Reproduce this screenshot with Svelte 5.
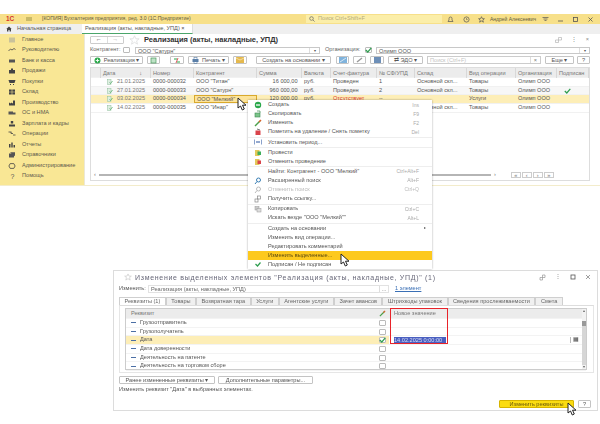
<script>
  const nav = [
    ['Главное', 'M-3-2.5h6v5h-6z', '#c9c29a'],
    ['Руководителю', 'M-3.5 1l2-2 1.5 1 2-1.5 1.5 1', 'none'],
    ['Банк и касса', 'M-3-1.5h6v3h-6z', '#555'],
    ['Продажи', 'M-3-1h6v3.5h-6zM-1-2.5h2v1.5h-2z', '#444'],
    ['Покупки', 'M-3.5-2h7l-1 3h-5zM-2 2h1v1h-1zM1 2h1v1h-1z', '#444'],
    ['Склад', 'M-3-2.5h2.7v2.3h-2.7zM.3-2.5h2.7v2.3h-2.7zM-3 .3h2.7v2.3h-2.7zM.3.3h2.7v2.3h-2.7z', '#444'],
    ['Производство', 'M-3 2.5v-3l2 1v-1l2 1v-3h2v5z', '#444'],
    ['ОС и НМА', 'M-3.5-1.5h4.5v3h-4.5zM1-.5h2.5v2h-2.5z', '#555'],
    ['Зарплата и кадры', 'M-1.2-3h2.4v2.5h-2.4zM-3 .5h6v2h-6z', '#444'],
    ['Операции', 'M-3.5-2h3M-1-2v1.5h2M1 1h2.5', 'none'],
    ['Отчеты', 'M-3-1h1.5v3.5h-1.5zM-.7-2.5h1.4v5h-1.4zM1.5 0h1.5v2.5h-1.5z', '#444'],
    ['Справочники', 'M-3-1.5h5v4h-5zM-2-2.7h5v4', '#555'],
    ['Администрирование', 'M-1.8-2.4h3.6l1.3 2.4-1.3 2.4h-3.6l-1.3-2.4z', 'none'],
    ['Помощь', '', 'none'],
  ];

  const columns = ['', 'Дата', 'Номер', 'Контрагент', 'Сумма', 'Валюта', 'Счет-фактура', '№ СФ/УПД', 'Склад', 'Вид операции', 'Организация', 'Подписан'];

  const docs = [
    { date: '21.01.2025', num: '0000-000032', who: 'ООО "Титан"', sum: '16 000,00', cur: 'руб.', inv: 'Проведен', no: '1', store: 'Основной скл...', op: 'Товары' },
    { date: '27.01.2025', num: '0000-000033', who: 'ООО "Сатурн"', sum: '960 000,00', cur: 'руб.', inv: 'Проведен', no: '2', store: 'Основной скл...', op: 'Товары', signed: true },
    { date: '03.02.2025', num: '0000-000034', who: 'ООО "Мелкий"', sum: '120 000,00', cur: 'руб.', inv: 'Отсутствует', no: '--', store: '', op: 'Услуги', selected: true },
    { date: '14.02.2025', num: '0000-000035', who: 'ООО "Инар"', sum: '', cur: '', inv: '', no: '', store: 'Основной скл...', op: 'Товары' },
  ];

  const menu = [
    [
      { label: 'Создать', key: 'Ins', icon: 'add' },
      { label: 'Скопировать', key: 'F9', icon: 'copy' },
      { label: 'Изменить', key: 'F2', icon: 'edit' },
      { label: 'Пометить на удаление / Снять пометку', key: 'Del', icon: 'del' },
    ],
    [{ label: 'Установить период...', icon: 'period' }],
    [
      { label: 'Провести', icon: 'post' },
      { label: 'Отменить проведение', icon: 'unpost' },
    ],
    [
      { label: 'Найти: Контрагент - ООО "Мелкий"', key: 'Ctrl+Alt+F' },
      { label: 'Расширенный поиск', key: 'Alt+F', icon: 'find' },
      { label: 'Отменить поиск', key: 'Ctrl+Q', icon: 'unfind', muted: true },
      { label: 'Получить ссылку...', icon: 'link' },
    ],
    [
      { label: 'Копировать', key: 'Ctrl+C', icon: 'clip' },
      { label: 'Искать везде "ООО "Мелкий""', key: 'Alt+L' },
    ],
    [
      { label: 'Создать на основании', arrow: true },
      { label: 'Изменить вид операции...' },
      { label: 'Редактировать комментарий' },
      { label: 'Изменить выделенные...', active: true },
      { label: 'Подписан / Не подписан', icon: 'check' },
    ],
  ];

  const tabs = ['Реквизиты (1)', 'Товары', 'Возвратная тара', 'Услуги', 'Агентские услуги', 'Зачет авансов', 'Штрихкоды упаковок', 'Сведения прослеживаемости', 'Смета'];
  const props = ['Грузоотправитель', 'Грузополучатель', 'Дата', 'Дата доверенности', 'Деятельность на патенте', 'Деятельность на торговом сборе'];
</script>

{#snippet cursor()}
  <svg width="11" height="14" viewBox="0 0 11 14"><path d="M1 1v10l2.5-2 1.8 4 2-1-1.8-3.800H9z" fill="#fff" stroke="#222" stroke-width="1"/></svg>
{/snippet}

{#snippet check()}
  <svg width="7" height="6" viewBox="0 0 7 6"><path d="M.8 3l2 2L6.300.8" fill="none" stroke="#2f9e4f" stroke-width="1.200"/></svg>
{/snippet}

{#snippet menuIcon(name)}
  <svg width="8" height="8" viewBox="0 0 8 8">
    {#if name === 'add'}
      <circle cx="4" cy="4" r="3.200" fill="#2aa84a"/><path d="M2 4h4" stroke="#fff" stroke-width="1.300"/>
    {:else if name === 'copy'}
      <rect x="1" y="3" width="5" height="4" fill="#7cc48a" stroke="#3c8a50" stroke-width=".6"/><path d="M3 1h3v2" fill="none" stroke="#3c8a50" stroke-width=".7"/>
    {:else if name === 'edit'}
      <path d="M1 7l5-5" stroke="#4aa04a" stroke-width="1.400"/><path d="M5 3l2-2" stroke="#d9602a" stroke-width="1.400"/>
    {:else if name === 'del'}
      <rect x="1.500" y="2.500" width="5" height="4.500" fill="#d9434a"/><path d="M3 1l3 1" stroke="#555" stroke-width=".8"/>
    {:else if name === 'period'}
      <path d="M0 1.500v5M8 1.500v5M2 4h4" stroke="#2b55a0" stroke-width="1.100"/>
    {:else if name === 'post'}
      <rect x="1" y="1" width="4.500" height="6" fill="#e3c95a"/><rect x="3.500" y="2.500" width="3.500" height="3.500" fill="#3fae5a"/>
    {:else if name === 'unpost'}
      <rect x="1" y="1" width="4.500" height="6" fill="#e3c95a"/><rect x="3.500" y="2.500" width="3.500" height="3.500" fill="#d9434a"/>
    {:else if name === 'find'}
      <circle cx="4.500" cy="3" r="2" fill="none" stroke="#3a7fb5"/><path d="M3 4.500L1 7" stroke="#3a7fb5"/>
    {:else if name === 'unfind'}
      <circle cx="4.500" cy="3" r="2" fill="none" stroke="#bbb"/><path d="M3 4.500L1 7" stroke="#bbb"/>
    {:else if name === 'link'}
      <rect x="3.500" y="1" width="3" height="3" fill="none" stroke="#888" stroke-width=".7"/><rect x="1" y="4" width="3" height="3" fill="none" stroke="#888" stroke-width=".7"/>
    {:else if name === 'clip'}
      <rect x="1" y="1.500" width="4" height="3.500" fill="#ccc" stroke="#999" stroke-width=".5"/><rect x="3" y="3.500" width="4" height="3.500" fill="#ddd" stroke="#999" stroke-width=".5"/>
    {:else if name === 'check'}
      <path d="M1.500 4l2 2 3-3.500" fill="none" stroke="#2f9e4f" stroke-width="1.200"/>
    {/if}
  </svg>
{/snippet}

<div class="page">
  <section class="main-window">
    <header class="titlebar">
      <span class="logo">1С</span>
      <span class="burger"></span>
      <span class="app-title">[КОПИЯ] Бухгалтерия предприятия, ред. 3.0 (1С:Предприятие)</span>
      <span class="search">
        <svg width="6" height="6" viewBox="0 0 6 6"><circle cx="2.500" cy="2.500" r="1.800" fill="none" stroke="#666" stroke-width=".7"/><path d="M4 4l1.600 1.600" stroke="#666" stroke-width=".7"/></svg>
        Поиск Ctrl+Shift+F
      </span>
      <span class="title-icons">
        <svg width="7" height="7" viewBox="0 0 7 7"><path d="M1 5.500h5L5 4V2.500a1.500 1.500 0 0 0-3 0V4z" fill="none" stroke="#555" stroke-width=".7"/></svg>
        <svg width="7" height="7" viewBox="0 0 7 7"><circle cx="3.500" cy="3.500" r="2.600" fill="none" stroke="#555" stroke-width=".7"/><path d="M3.500 2v1.600h1.200" fill="none" stroke="#555" stroke-width=".6"/></svg>
        <svg width="7" height="7" viewBox="0 0 7 7"><path d="M3.500.7l.9 2h2l-1.600 1.400.6 2.100-1.900-1.200-1.900 1.200.6-2.100L.6 2.700h2z" fill="none" stroke="#555" stroke-width=".7"/></svg>
      </span>
      <span class="user">Андрей Алексеевич</span>
      <span class="win-icons">
        <svg width="7" height="7" viewBox="0 0 7 7"><path d="M.5 1.500h6M1.500 3h4M2.500 4.500h2" stroke="#555" stroke-width=".7"/></svg>
        <svg width="7" height="7" viewBox="0 0 7 7"><path d="M1 5h5" stroke="#555" stroke-width=".8"/></svg>
        <svg width="7" height="7" viewBox="0 0 7 7"><rect x="1.500" y="1.500" width="4" height="4" fill="none" stroke="#555" stroke-width=".8"/></svg>
        <svg width="7" height="7" viewBox="0 0 7 7"><path d="M1.500 1.500l4 4M5.500 1.500l-4 4" stroke="#555" stroke-width=".8"/></svg>
      </span>
    </header>

    <div class="tabstrip">
      <div class="home-tab">
        <svg width="6" height="6" viewBox="0 0 6 6"><path d="M3 .5L.3 3H1v2.500h1.400V4h1.200v1.500H5V3h.7z" fill="#444"/></svg>
        Начальная страница
      </div>
      <div class="doc-tab">Реализация (акты, накладные, УПД) <b>×</b></div>
    </div>

    <div class="workspace">
      <nav class="sidebar">
        {#each nav as [label, d, fill]}
          <div class="nav-item">
            <svg width="8" height="8" viewBox="-4 -4 8 8">
              {#if d}
                <path {d} fill={fill} stroke={fill === 'none' ? '#444' : 'none'} stroke-width=".8"/>
              {:else}
                <text x="-1.500" y="2.500" font-size="7" fill="#555">?</text>
              {/if}
            </svg>
            <span>{label}</span>
          </div>
        {/each}
      </nav>

      <main class="content">
        <div class="heading">
          <div class="nav-btns"><span>←</span><span class="dim">→</span></div>
          <svg class="fav" width="11" height="10" viewBox="0 0 11 10"><path d="M5.500.8l1.400 3h3.200L7.600 5.900l.9 3.300-3-1.900-3 1.900.9-3.300L.9 3.800h3.200z" fill="none" stroke="#ddd" stroke-width=".8"/></svg>
          <h1>Реализация (акты, накладные, УПД)</h1>
          <div class="heading-tools">
            <svg width="7" height="6" viewBox="0 0 7 6"><path d="M3.500.5h3v2.500h-3zM.5 3h3v2.500h-3z" fill="none" stroke="#aaa" stroke-width=".6"/></svg>
            <span class="dots">⋮</span><span class="close">×</span>
          </div>
        </div>

        <div class="filters">
          <span class="lbl">Контрагент:</span>
          <span class="box"></span>
          <span class="field party">ООО "Сатурн"<i>▾</i></span>
          <span class="lbl org-lbl">Организация:</span>
          <span class="box on">{@render check()}</span>
          <span class="field org">Олимп ООО<i>▾</i></span>
        </div>

        <div class="toolbar">
          <button class="btn w-real"><svg width="7" height="7" viewBox="0 0 8 8"><circle cx="4" cy="4" r="3.400" fill="#2aa84a"/><path d="M4 2v4M2 4h4" stroke="#fff"/></svg>Реализация ▾</button>
          <button class="btn w-ico"><svg width="7" height="7" viewBox="0 0 7 7"><rect x="1" y="1" width="5" height="5" fill="#bfe2c6" stroke="#4a9a5e" stroke-width=".7"/></svg></button>
          <button class="btn w-ico2"><svg width="8" height="7" viewBox="0 0 8 7"><path d="M1 2h3M4 5h3" stroke="#2aa84a" stroke-width="1.200"/><path d="M5 1l-2 5" stroke="#d9434a" stroke-width=".9"/></svg></button>
          <button class="btn w-print"><svg width="7" height="7" viewBox="0 0 7 7"><rect x=".5" y="2" width="6" height="3" fill="#5b7fa8"/><rect x="2" y=".5" width="3" height="6" fill="none" stroke="#5b7fa8" stroke-width=".6"/></svg>Печать ▾</button>
          <button class="btn w-mail"><svg width="8" height="6" viewBox="0 0 8 6"><rect width="8" height="6" fill="#e5b94d"/><path d="M0 1l4 2 4-2" fill="none" stroke="#fff" stroke-width=".5"/></svg></button>
          <button class="btn w-create">Создать на основании ▾</button>
          <button class="btn w-a"><svg width="8" height="6" viewBox="0 0 8 6"><rect width="8" height="6" fill="#7fb3dc"/><path d="M1 5l6-4" stroke="#fff" stroke-width=".7"/></svg></button>
          <button class="btn w-b"><svg width="7" height="6" viewBox="0 0 7 6"><path d="M1 5l5-4" stroke="#999" stroke-width="1.500"/></svg></button>
          <button class="btn w-c"><svg width="7" height="6" viewBox="0 0 7 6"><rect width="7" height="6" fill="#6d8fb8"/></svg></button>
          <button class="btn w-edo">⇄ ЭДО ▾</button>
          <span class="find">Поиск (Ctrl+F)<i>×</i></span>
          <button class="btn w-more">Еще ▾</button>
          <button class="btn w-help">?</button>
        </div>

        <div class="table">
          <div class="row head">
            {#each columns as c, i}
              <span>{c}{#if i === 1}<em>↓</em>{/if}</span>
            {/each}
          </div>
          {#each docs as d}
            <div class="row" class:sel={d.selected}>
              <span></span>
              <span class="date"><svg width="6" height="6" viewBox="0 0 6 6"><rect x=".5" y=".5" width="3.500" height="5" fill="#dfeee2" stroke="#8fbf9b" stroke-width=".5"/><path d="M2.500 3.500l1 1 2-2.500" fill="none" stroke="#3fa35a" stroke-width=".7"/></svg>{d.date}</span>
              <span>{d.num}</span>
              <span class:cell-focus={d.selected}>{d.who}</span>
              <span class="right">{d.sum}</span>
              <span>{d.cur}</span>
              <span class:red={d.selected}>{d.inv}</span>
              <span>{d.no}</span>
              <span>{d.store}</span>
              <span>{d.op}</span>
              <span>Олимп ООО</span>
              <span class="mid">{#if d.signed}{@render check()}{/if}</span>
            </div>
          {/each}
          <div class="table-fill"></div>
          <div class="table-foot">
            <span class="arrow">‹</span>
            <span class="scroll"></span>
            <span class="arrow">›</span>
            <span class="pager"><i>«</i><i>‹</i><i>›</i><i>»</i></span>
          </div>
        </div>
      </main>
    </div>
  </section>

  <div class="pointer on-row">{@render cursor()}</div>

  <div class="context-menu">
    {#each menu as group}
      <div class="menu-group">
        {#each group as item}
          <div class="menu-item" class:active={item.active} class:muted={item.muted}>
            <span class="mi">{#if item.icon}{@render menuIcon(item.icon)}{/if}</span>
            <span class="ml">{item.label}</span>
            {#if item.key}<span class="mk">{item.key}</span>{/if}
            {#if item.arrow}<span class="ma">▸</span>{/if}
          </div>
        {/each}
      </div>
    {/each}
    <div class="pointer on-menu">{@render cursor()}</div>
  </div>

  <section class="dialog">
    <div class="dlg-title">
      <svg width="8" height="8" viewBox="0 0 11 10"><path d="M5.500.8l1.400 3h3.200L7.600 5.900l.9 3.300-3-1.900-3 1.900.9-3.300L.9 3.800h3.200z" fill="none" stroke="#ccc"/></svg>
      <h2>Изменение выделенных элементов "Реализация (акты, накладные, УПД)" (1)</h2>
      <span class="dlg-tools">
        <svg width="7" height="7" viewBox="0 0 7 7"><path d="M3.500 1h2.500v2.500h-2.500zM1 3.500h2.500V6H1z" fill="none" stroke="#888" stroke-width=".6"/></svg>
        <span>⋮</span>
        <svg width="6" height="6" viewBox="0 0 6 6"><rect x="1" y="1" width="4" height="4" fill="none" stroke="#555" stroke-width=".8"/></svg>
        <svg width="6" height="6" viewBox="0 0 6 6"><path d="M1 1l4 4M5 1L1 5" stroke="#777" stroke-width=".7"/></svg>
      </span>
    </div>

    <div class="dlg-change">
      <span class="dark">Изменить:</span>
      <span class="dlg-field">Реализация (акты, накладные, УПД)<i>...</i></span>
      <a href="#top">1 элемент</a>
    </div>

    <div class="dlg-tabs">
      {#each tabs as t, i}
        <span class="dlg-tab" class:current={i === 0}>{t}</span>
      {/each}
    </div>

    <div class="dlg-panel">
      <div class="attrs">
        <div class="attr attr-head">
          <span class="a-name">Реквизит</span>
          <span class="a-check"><svg width="7" height="7" viewBox="0 0 8 8"><path d="M1 7l5-5" stroke="#4aa04a" stroke-width="1.400"/><path d="M5 3l2-2" stroke="#d9602a" stroke-width="1.400"/></svg></span>
          <span class="a-val">Новое значение</span>
        </div>
        {#each props as p, i}
          <div class="attr" class:picked={i === 2}>
            <span class="a-name"><i class="dash"></i>{p}</span>
            <span class="a-check"><span class="box small" class:on={i === 2}>{#if i === 2}{@render check()}{/if}</span></span>
            <span class="a-val">
              {#if i === 2}
                <span class="date-edit"><span class="hl">14.02.2025 0:00:00</span><span class="cal">▦</span></span>
              {/if}
            </span>
          </div>
        {/each}
        <div class="vscroll"><span>▴</span><b></b><em></em><span>▾</span></div>
        <div class="red-box"></div>
      </div>
    </div>

    <div class="dlg-btns">
      <button class="btn plain">Ранее измененные реквизиты ▾</button>
      <button class="btn plain">Дополнительные параметры...</button>
    </div>

    <p class="hint">Изменить реквизит "Дата" в выбранных элементах.</p>

    <div class="dlg-foot">
      <button class="primary">Изменить реквизиты</button>
      <button class="btn q">?</button>
      <div class="pointer on-btn">{@render cursor()}</div>
    </div>
  </section>
</div>

<style>
  :global(body) {
    margin: 0;
    background: #fff;
  }
  .page {
    position: relative;
    box-sizing: border-box;
    width: 600px;
    height: 424px;
    padding-top: 14px;
    overflow: hidden;
    font-family: "Liberation Sans", Arial, sans-serif;
    font-size: 5.600px;
    line-height: 1;
    color: #555;
    filter: blur(0.35px);
  }
  span, i, em { font-style: normal; }
  svg { display: block; flex: none; }

  .main-window { height: 171px; background: #fff; border-bottom: 1px solid #f3eccb; }

  .titlebar {
    display: flex;
    align-items: center;
    height: 10px;
    background: #f7e08a;
    padding-left: 6px;
    color: #5f5a3c;
  }
  .logo { width: 14px; color: #d4342a; font-weight: bold; font-size: 6.500px; }
  .burger { width: 6px; height: 4px; margin: 0 10px 0 6px; background: #c9b968; }
  .app-title { width: 264px; white-space: nowrap; font-size: 5.100px; }
  .search { display: flex; align-items: center; gap: 3px; width: 136px; height: 8px; padding-left: 3px; background: #fbeea9; color: #b5ac7a; box-sizing: border-box; }
  .title-icons { display: flex; gap: 8.500px; margin-left: 5px; }
  .user { margin-left: 5px; width: 50px; white-space: nowrap; font-size: 5px; }
  .win-icons { display: flex; gap: 8px; margin-left: 2px; }

  .tabstrip { display: flex; height: 10px; background: #efefef; }
  .home-tab { display: flex; align-items: center; gap: 5px; width: 76px; padding-left: 6px; white-space: nowrap; }
  .doc-tab {
    width: 111px;
    padding-left: 3px;
    box-sizing: border-box;
    height: 10px;
    line-height: 9px;
    background: #fff;
    border-bottom: 1px solid #4aa56a;
    border-right: 1px solid #ddd;
    white-space: nowrap;
    overflow: hidden;
  }
  .doc-tab b { color: #444; font-weight: normal; }

  .workspace { display: flex; height: 151px; }
  .sidebar { width: 84px; background: #f9e795; padding-top: 0.500px; border-right: 1px solid #ece8d6; }
  .nav-item { display: flex; align-items: center; height: 10.500px; padding-left: 8px; gap: 6px; color: #5c5a4c; }

  .content { flex: 1; display: flex; flex-direction: column; padding: 2px 10px 4px 5px; min-width: 0; }

  .heading { display: flex; align-items: center; height: 8px; }
  .nav-btns { display: flex; width: 34px; height: 8px; border: 1px solid #ccc; box-sizing: border-box; border-radius: 1px; flex: none; }
  .nav-btns span { flex: 1; text-align: center; line-height: 5px; color: #333; font-size: 6px; }
  .nav-btns .dim { color: #aaa; border-left: 1px solid #ddd; }
  .fav { margin: 0 4px 0 5px; }
  h1 { margin: 0; font-size: 7.500px; color: #333; font-weight: bold; white-space: nowrap; }
  .heading-tools { margin-left: auto; display: flex; gap: 9px; align-items: center; color: #888; }
  .close { margin-right: 1px; }

  .filters { display: flex; align-items: center; margin-top: 2.500px; height: 7px; }
  .lbl { color: #666; white-space: nowrap; width: 33px; flex: none; }
  .box { display: flex; align-items: center; justify-content: center; width: 7px; height: 6px; box-sizing: border-box; border: 0.500px solid #bbb; flex: none; border-radius: 1px; background: #fff; }
  .field { position: relative; display: block; height: 7px; box-sizing: border-box; padding-left: 2px; line-height: 6px; border: 0.500px solid #c8c8c8; color: #555; flex: none; }
  .field i { position: absolute; right: 0; top: 0; bottom: 0; width: 9px; text-align: center; border-left: 0.500px solid #ddd; font-size: 4px; }
  .party { margin-left: 5px; width: 185px; }
  .org-lbl { margin-left: 5px; width: 40px; }
  .org { margin-left: 4px; width: 214px; }

  .toolbar { display: flex; align-items: center; margin-top: 2px; height: 9px; }
  .btn {
    display: flex;
    align-items: center;
    justify-content: center;
    gap: 3px;
    height: 8px;
    padding: 0;
    box-sizing: border-box;
    border: 0.500px solid #c4c4c4;
    border-radius: 1px;
    background: #fff;
    color: #555;
    font: 5.600px "Liberation Sans", Arial, sans-serif;
    white-space: nowrap;
    flex: none;
  }
  .w-real { width: 53px; }
  .w-ico { width: 13px; margin-left: 4px; }
  .w-ico2 { width: 14px; margin-left: 10px; }
  .w-print { width: 41px; margin-left: 4px; }
  .w-mail { width: 14px; margin-left: 4px; }
  .w-create { width: 75px; margin-left: 9px; }
  .w-a { width: 13px; margin-left: 5px; }
  .w-b { width: 13px; margin-left: 4px; }
  .w-c { width: 14px; margin-left: 4px; }
  .w-edo { width: 35px; margin-left: 4px; }
  .find { position: relative; width: 114px; height: 8px; box-sizing: border-box; border: 0.500px solid #ccc; color: #c4c4c4; line-height: 7px; padding-left: 2px; white-space: nowrap; flex: none; margin-left: 4px; }
  .find i { position: absolute; right: 0; top: 0; bottom: 0; width: 9px; border-left: 0.500px solid #ddd; text-align: center; color: #777; }
  .w-more { width: 29px; margin-left: 4px; }
  .w-help { width: 13px; margin-left: 3px; }

  .table { flex: 1; display: flex; flex-direction: column; margin-top: 2.500px; border: 0.500px solid #ddd; min-height: 0; }
  .row {
    display: grid;
    grid-template-columns: 10px 50px 43px 63px 45px 29px 46px 38px 52px 49px 41px 1fr;
    align-items: center;
    box-sizing: border-box;
    height: 8.700px;
    border-bottom: 0.500px solid #f1f1f1;
    white-space: nowrap;
  }
  .row > span { padding-left: 2px; overflow: hidden; }
  .row:nth-child(3) { background: #f7f7f7; }
  .head { height: 10px; background: #ececec; color: #777; }
  .head > span { position: relative; height: 10px; line-height: 10px; border-right: 0.500px solid #d8d8d8; box-sizing: border-box; }
  .head em { position: absolute; right: 8px; color: #666; }
  .row .right { text-align: right; padding-right: 4.500px; }
  .row > span.date { display: flex; align-items: center; gap: 4px; color: #777; padding-left: 6px; }
  .row.sel { background: #fdeeb7; }
  .cell-focus { height: 100%; line-height: 7.500px; box-sizing: border-box; border: 0.500px solid #d9a92c; background: #fde49a; }
  .red { color: #dd3a2c; }
  .mid svg { margin-left: 5px; }
  .table-fill { flex: 1; }
  .table-foot { display: flex; align-items: center; gap: 3px; height: 8px; padding: 0 0 1px 3px; color: #777; }
  .scroll { width: 392px; height: 2px; background: #b5b5b5; }
  .pager { display: flex; gap: 1px; margin-left: 12px; }
  .pager i { width: 10px; height: 6px; line-height: 5px; text-align: center; border: 0.500px solid #ccc; box-sizing: border-box; }

  .context-menu {
    position: absolute;
    left: 248px;
    top: 100px;
    z-index: 2;
    width: 184px;
    padding-top: 0.500px;
    background: #fff;
    box-shadow: 0 0 2px rgba(0, 0, 0, 0.35);
  }
  .menu-group { box-sizing: content-box; border-bottom: 1px solid #eee; padding-bottom: 0.300px; }
  .menu-group:nth-last-child(2) { border-bottom: 0; padding-bottom: 0; }
  .menu-item { display: flex; align-items: center; height: 9px; color: #555; white-space: nowrap; }
  .mi { width: 20px; display: flex; justify-content: center; flex: none; }
  .mk { margin-left: auto; margin-right: 13px; color: #aaa; font-size: 5px; }
  .ma { margin-left: auto; margin-right: 6px; color: #555; font-size: 4px; }
  .muted .ml { color: #bbb; }
  .muted .mk { color: #bbb; }
  .active { background: #fdc91e; color: #5c4a10; }

  .pointer { position: absolute; z-index: 3; line-height: 0; }
  .on-row { left: 237px; top: 97px; }
  .on-menu { left: 92px; top: 153px; }
  .on-btn { right: 14px; top: 2px; }

  .dialog {
    position: relative;
    box-sizing: border-box;
    width: 485px;
    height: 141px;
    margin: 84px 0 0 113px;
    padding: 0 5px 0 5px;
    background: #fff;
    border: 1px solid #dcdcdc;
  }
  .dlg-title { display: flex; align-items: center; gap: 3px; height: 12px; padding-left: 5px; }
  h2 { margin: 0; font-size: 7px; font-weight: normal; color: #667; letter-spacing: 0.700px; white-space: nowrap; }
  .dlg-tools { display: flex; align-items: center; gap: 9px; margin-left: auto; color: #888; padding-right: 1px; }

  .dlg-change { display: flex; align-items: center; height: 8px; margin-top: 2px; }
  .dark { color: #555; width: 29px; flex: none; }
  .dlg-field { position: relative; width: 241px; height: 8px; box-sizing: border-box; padding-left: 2px; line-height: 7px; border: 0.500px solid #e2e2e2; color: #666; }
  .dlg-field i { position: absolute; right: 0; top: 0; width: 8px; text-align: center; border-left: 0.500px solid #ddd; height: 100%; }
  a { margin-left: 6px; color: #3a6fb5; }

  .dlg-tabs { display: flex; height: 8px; margin-top: 4px; white-space: nowrap; }
  .dlg-tab { box-sizing: border-box; padding: 0 4.500px; height: 8px; line-height: 7px; background: #f0f0f0; border: 0.500px solid #cfcfcf; border-bottom: 0; color: #666; }
  .dlg-tab.current { background: #fff; }

  .dlg-panel { width: 475px; height: 68px; box-sizing: border-box; padding: 2px 6px 2px 5px; border: 1px solid #e6e6e6; border-top-color: #ddd; }
  .attrs { position: relative; height: 100%; border: 0.500px solid #ccc; box-sizing: border-box; }
  .attr { display: flex; align-items: center; box-sizing: border-box; height: 8.700px; border-bottom: 0.500px solid #f3f3f3; padding-right: 5px; }
  .attr-head { height: 10px; background: #ececec; color: #777; }
  .a-name { display: flex; align-items: center; gap: 2px; width: 250px; padding-left: 5px; box-sizing: border-box; flex: none; white-space: nowrap; }
  .a-check { display: flex; justify-content: center; width: 13px; flex: none; }
  .a-val { padding-left: 5px; flex: 1; min-width: 0; }
  .dash { display: block; width: 5px; height: 1px; background: #4b6fa5; margin-right: 2px; }
  .picked { background: linear-gradient(90deg, #fdeeb7 263px, #fff 263px); }
  .date-edit { display: flex; align-items: center; height: 8px; }
  .hl { background: #4a5fc0; color: #d6dcf5; white-space: nowrap; width: 52px; overflow: hidden; height: 7px; line-height: 7px; }
  .cal { margin-left: auto; width: 10px; text-align: center; border-left: 0.500px solid #bbb; color: #444; }
  .vscroll { position: absolute; right: 0; top: 0; bottom: 0; width: 4px; display: flex; flex-direction: column; align-items: center; background: #f2f2f2; color: #666; font-size: 4px; z-index: 1; }
  .vscroll b { display: block; width: 4px; height: 5px; margin-top: 8px; background: #999; }
  .vscroll em { display: block; width: 4px; flex: 1; background: #d6d6d6; }
  .red-box { position: absolute; left: 264px; top: -1px; width: 58px; height: 36px; box-sizing: border-box; border: 1px solid #e8232a; z-index: 1; }

  .dlg-btns { display: flex; gap: 3px; margin-top: 3px; }
  .plain:first-child { width: 96px; }
  .plain:last-child { width: 95px; }
  .hint { margin: 3px 0 0; color: #555; }
  .dlg-foot { position: relative; display: flex; justify-content: flex-end; gap: 4px; margin-top: 7px; padding-right: 1px; }
  .primary { width: 75px; height: 8px; padding: 0; border: 0.500px solid #d6b400; border-radius: 1px; background: #fbdc12; color: #6b5a0a; font: 5.600px "Liberation Sans", Arial, sans-serif; }
  .q { width: 13px; }
</style>
